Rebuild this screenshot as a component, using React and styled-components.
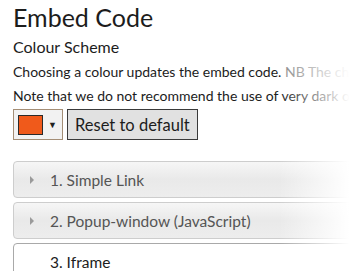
import styled, { createGlobalStyle } from "styled-components";

const GlobalStyle = createGlobalStyle`
  html, body {
    margin: 0;
    padding: 0;
    background: #fff;
    overflow: hidden;
  }
  body {
    font-family: Lato, "Liberation Sans", sans-serif;
    color: #1c1c1c;
  }
`;

const sections = [
  { label: "1. Simple Link", open: false },
  { label: "2. Popup-window (JavaScript)", open: false },
  { label: "3. Iframe", open: true },
];

function App() {
  return (
    <Page>
      <GlobalStyle />
      <Title>Embed Code</Title>
      <SubTitle>Colour Scheme</SubTitle>
      <Text>
        Choosing a colour updates the embed code. <Muted>NB The chosen colour is applied to links and buttons.</Muted>
      </Text>
      <Text>Note that we do not recommend the use of very dark or very light colours.</Text>
      <Controls>
        <Picker>
          <Swatch />
          <Caret>▼</Caret>
        </Picker>
        <ResetButton>Reset to default</ResetButton>
      </Controls>
      <Accordion>
        {sections.map((s) => (
          <Item key={s.label} $open={s.open}>
            {!s.open && <Arrow />}
            <ItemLabel $open={s.open}>{s.label}</ItemLabel>
          </Item>
        ))}
      </Accordion>
      <Fade />
    </Page>
  );
}

const Page = styled.div`
  position: relative;
  width: 359px;
  height: 271px;
  padding: 0 0 0 13px;
  box-sizing: border-box;
  overflow: hidden;
`;

const Title = styled.h1`
  margin: 0;
  padding-top: 1px;
  font-size: 25px;
  font-weight: 400;
  line-height: 32px;
  white-space: nowrap;
`;

const SubTitle = styled.h2`
  margin: 4px 0 0;
  font-size: 16px;
  font-weight: 400;
  line-height: 20px;
  white-space: nowrap;
`;

const Text = styled.p`
  margin: 5px 0 0;
  font-size: 14px;
  line-height: 19px;
  white-space: nowrap;
`;

const Muted = styled.span`
  color: #888;
`;

const Controls = styled.div`
  display: flex;
  gap: 4px;
  margin-top: 4px;
`;

const Picker = styled.div`
  display: flex;
  align-items: center;
  width: 50px;
  height: 31px;
  box-sizing: border-box;
  padding-left: 4px;
  border: 1px solid #a48e76;
  background: #f2f2f2;
`;

const Swatch = styled.div`
  width: 25px;
  height: 20px;
  box-sizing: border-box;
  border: 1px solid #2a2a2a;
  background: #f05a1b;
`;

const Caret = styled.span`
  margin-left: 5px;
  font-size: 9px;
  color: #222;
`;

const ResetButton = styled.button`
  height: 31px;
  padding: 0 7px;
  border: 1px solid #3a3a3a;
  border-radius: 0;
  background: #e1e1e1;
  font-family: Lato, "Liberation Sans", sans-serif;
  font-size: 16.5px;
  color: #1c1c1c;
`;

const Accordion = styled.div`
  display: flex;
  flex-direction: column;
  gap: 4px;
  margin-top: 21px;
  width: 342px;
`;

const Item = styled.div`
  display: flex;
  align-items: center;
  height: 37px;
  box-sizing: border-box;
  border: 1px solid ${(p) => (p.$open ? "#a9a9a9" : "#cdcdcd")};
  border-radius: 4px;
  background: ${(p) =>
    p.$open ? "#fff" : "linear-gradient(#f6f6f6, #e9e9e9 50%, #ededed)"};
  padding-left: ${(p) => (p.$open ? "36px" : "16px")};
`;

const Arrow = styled.span`
  width: 0;
  height: 0;
  border-top: 4px solid transparent;
  border-bottom: 4px solid transparent;
  border-left: 4px solid #9a9a9a;
  margin-right: 16px;
`;

const ItemLabel = styled.span`
  font-size: 15.5px;
  color: ${(p) => (p.$open ? "#1c1c1c" : "#555")};
  white-space: nowrap;
`;

const Fade = styled.div`
  position: absolute;
  top: 0;
  right: 0;
  width: 80px;
  height: 100%;
  background: linear-gradient(to right, rgba(255, 255, 255, 0), #fff 88%);
  pointer-events: none;
`;

export default App;
